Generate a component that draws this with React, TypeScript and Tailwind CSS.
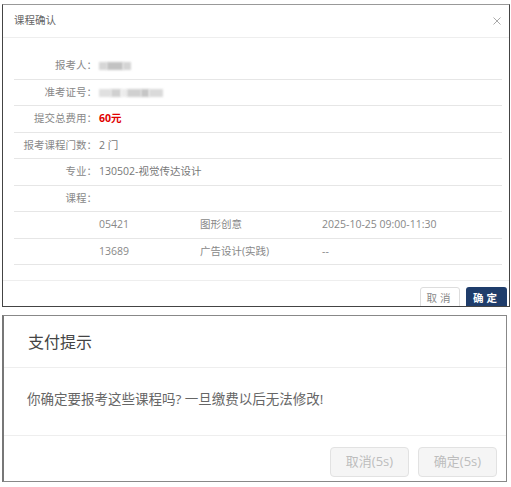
const font = "font-['Open_Sans','Noto_Sans_CJK_SC',sans-serif]";

type RowProps = {
  label: string;
  h: string;
  children?: React.ReactNode;
};

function InfoRow({ label, h, children }: RowProps) {
  return (
    <div className={`flex items-center border-b border-[#e6e6e6] ${h}`}>
      <div className="w-[83px] shrink-0 text-right text-[#888]">{label}：</div>
      <div className="ml-[2px] flex items-center text-[#777]">{children}</div>
    </div>
  );
}

function CourseRow({ code, name, time, h }: { code: string; name: string; time: string; h: string }) {
  return (
    <div className={`flex items-center border-b border-[#e6e6e6] pl-[85px] text-[#888] ${h}`}>
      <div className="w-[101px]">{code}</div>
      <div className="w-[122px]">{name}</div>
      <div>{time}</div>
    </div>
  );
}

function Blur({ w, c }: { w: string; c: string }) {
  return <div className={`h-[8px] blur-[1px] ${w} ${c}`} />;
}

export default function App() {
  return (
    <div className={`h-[487px] w-[511px] bg-white pt-[4px] ${font}`}>
      {/* course confirm dialog */}
      <div className="ml-[2px] flex h-[303px] w-[508px] flex-col overflow-hidden border border-[#444] border-t-[#999] bg-white text-[10.5px]">
        <div className="flex h-[33px] shrink-0 items-center justify-between border-b border-[#eee] pl-[11px] pr-[8px]">
          <span className="text-[#666]">课程确认</span>
          <svg width="8" height="8" viewBox="0 0 8 8">
            <path d="M0.5 0.5L7.5 7.5M7.5 0.5L0.5 7.5" stroke="#aaa" strokeWidth="1" />
          </svg>
        </div>

        <div className="ml-[11px] mr-[7px] pt-[15px] pb-[15px]">
          <InfoRow label="报考人" h="h-[27px]">
            <div className="flex items-center">
              <Blur w="w-[8px]" c="bg-[#d6d6d6]" />
              <Blur w="w-[16px]" c="bg-[#c2c2c2]" />
              <Blur w="w-[8px]" c="bg-[#d4d4d4]" />
            </div>
          </InfoRow>
          <InfoRow label="准考证号" h="h-[26px]">
            <div className="flex items-center">
              <Blur w="w-[12px]" c="bg-[#e0e0e0]" />
              <Blur w="w-[10px]" c="bg-[#d0d0d0]" />
              <Blur w="w-[6px]" c="bg-[#ececec]" />
              <Blur w="w-[14px]" c="bg-[#d0d0d0]" />
              <Blur w="w-[8px]" c="bg-[#c6c6c6]" />
              <Blur w="w-[14px]" c="bg-[#dadada]" />
            </div>
          </InfoRow>
          <InfoRow label="提交总费用" h="h-[27px]">
            <span className="font-bold text-[#e00000]">60元</span>
          </InfoRow>
          <InfoRow label="报考课程门数" h="h-[26px]">
            2 门
          </InfoRow>
          <InfoRow label="专业" h="h-[27px]">
            130502-视觉传达设计
          </InfoRow>
          <InfoRow label="课程" h="h-[26px]" />
          <CourseRow code="05421" name="图形创意" time="2025-10-25 09:00-11:30" h="h-[27px]" />
          <CourseRow code="13689" name="广告设计(实践)" time="--" h="h-[26px]" />
        </div>

        <div className="flex shrink-0 justify-end gap-[6px] border-t border-[#eee] pt-[6px] pr-[2px]">
          <button
            type="button"
            className="h-[24px] w-[40px] rounded-[3px] border border-[#ddd] bg-white tracking-[3px] text-[#888]"
          >
            取消
          </button>
          <button
            type="button"
            className="h-[24px] w-[41px] rounded-[3px] bg-[#1f3d6b] font-bold tracking-[3px] text-white"
          >
            确定
          </button>
        </div>
      </div>

      {/* payment tip dialog */}
      <div className="mt-[8px] ml-[2px] flex h-[167px] w-[505px] flex-col border border-[#888] border-l-2 border-l-[#777] bg-white">
        <div className="flex h-[52px] shrink-0 items-center border-b border-[#eee] pl-[24px] text-[16px] text-[#444]">
          支付提示
        </div>
        <div className="flex h-[68px] shrink-0 items-center border-b border-[#eee] pb-[4px] pl-[23px] text-[13.5px] text-[#666]">
          你确定要报考这些课程吗? 一旦缴费以后无法修改!
        </div>
        <div className="flex justify-end gap-[9px] pt-[11px] pr-[9px]">
          <button
            type="button"
            className="h-[30px] w-[79px] rounded-[4px] border border-[#e2e2e2] bg-[#f5f5f5] text-[13px] text-[#bdbdbd]"
          >
            取消(5s)
          </button>
          <button
            type="button"
            className="h-[30px] w-[79px] rounded-[4px] border border-[#e2e2e2] bg-[#f5f5f5] text-[13px] text-[#bdbdbd]"
          >
            确定(5s)
          </button>
        </div>
      </div>
    </div>
  );
}
